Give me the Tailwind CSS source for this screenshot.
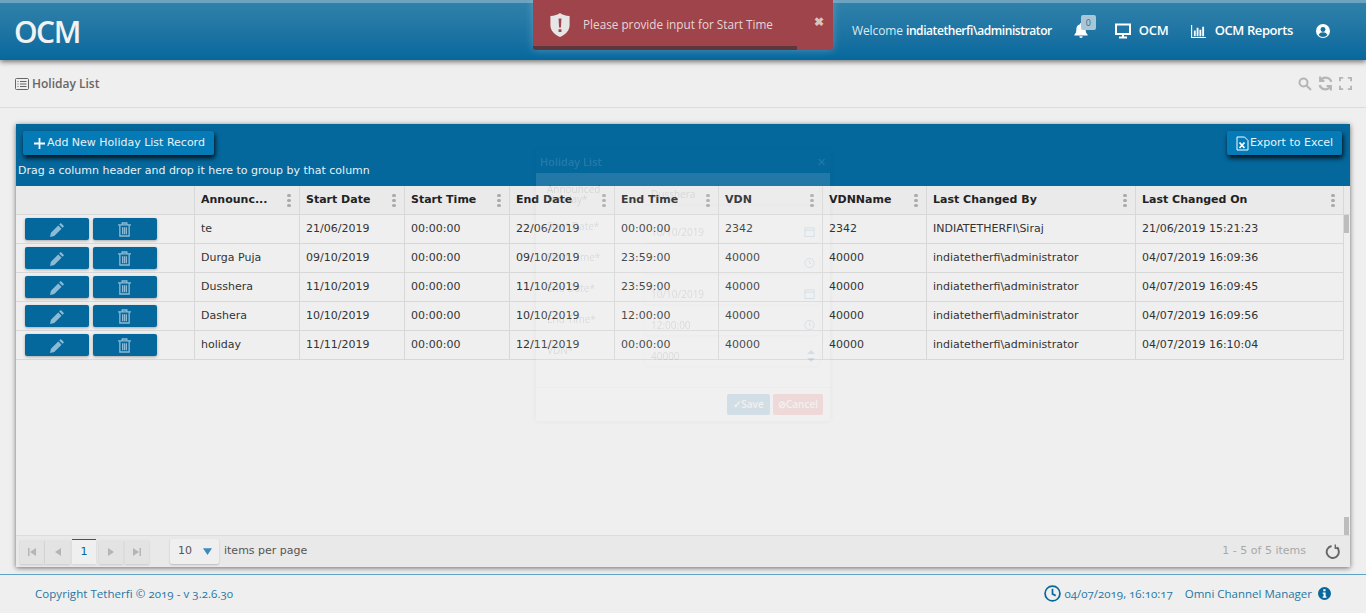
<!DOCTYPE html>
<html lang="en">
<head>
    <meta charset="UTF-8">
    <title>OCM - Holiday List</title>
    <script src="https://cdn.jsdelivr.net/npm/@tailwindcss/browser@4"></script>
</head>
<body class="bg-[#efefef] font-['Open_Sans',sans-serif] overflow-hidden">
<div class="relative w-[1366px] h-[613px] overflow-hidden flex flex-col">

    <!-- Navbar -->
    <nav class="h-[60px] shrink-0 border-t-[3px] border-[#6ba3c1] bg-gradient-to-b from-[#2f81a9] to-[#05689d] shadow-[0_2px_5px_rgba(0,0,0,0.5)] flex items-center text-white z-10">
        <h1 class="ml-[14px] text-[30px] leading-none font-semibold text-[#f2f2f2] tracking-[-1.5px] mt-[1px]">OCM</h1>
        <div class="ml-auto flex items-center h-full mt-[-1px]">
            <span class="text-[12px] text-[#dceaf2] tracking-[-0.1px]">Welcome <span class="font-semibold text-white tracking-[-0.43px]">indiatetherfi\administrator</span></span>
            <div class="relative ml-[22px] w-[14px] h-[16px]">
                <svg viewBox="0 0 16 18" class="w-[14px] h-[16px] fill-white"><path d="M8 0a1.2 1.2 0 0 1 1.2 1.3C12 2 13.3 4 13.3 7c0 3.500 1 4.800 2.200 6v1H.5v-1c1.200-1.200 2.200-2.500 2.200-6 0-3 1.300-5 4.100-5.700A1.200 1.200 0 0 1 8 0zM6 15h4a2 2 0 0 1-4 0z"/></svg>
                <span class="absolute left-[7px] top-[-8px] w-[15px] h-[15px] bg-[#a9c6d6] rounded-[2px] text-[9px] leading-[15px] text-center text-[#2f6f92]">0</span>
            </div>
            <svg viewBox="0 0 16 16" class="ml-[27px] w-[16px] h-[16px] fill-none stroke-white"><rect x="1" y="1.500" width="14" height="9.500" stroke-width="2"/><path d="M8 11v3M4 14.500h8" stroke-width="2"/></svg>
            <span class="ml-[8px] text-[13px] font-semibold tracking-[-0.2px]">OCM</span>
            <svg viewBox="0 0 16 14" class="ml-[22px] w-[15px] h-[13px] fill-white"><path d="M0 0h1.200v12.800H16V14H0z"/><path d="M3 6h2v6H3zM6 3h2v9H6zM9 5h2v7H9zM12 2h2v10h-2z"/></svg>
            <span class="ml-[9px] text-[13px] font-semibold tracking-[-0.4px]">OCM Reports</span>
            <svg viewBox="0 0 16 16" class="ml-[23px] mr-[36px] w-[14px] h-[14px]"><circle cx="8" cy="8" r="8" fill="#fff"/><circle cx="8" cy="6.200" r="2.800" fill="#1a7099"/><path d="M3 12.500c1-2.200 3-3 5-3s4 .8 5 3a6.500 6.500 0 0 1-10 0z" fill="#1a7099"/></svg>
        </div>
    </nav>

    <!-- Page title -->
    <div class="h-[48px] shrink-0 border-b border-[#dcdcdc] flex items-center pl-[15px] pr-[14px] text-[#666]">
        <svg viewBox="0 0 14 12" class="w-[14px] h-[12px] fill-none stroke-[#666]"><rect x=".5" y=".5" width="13" height="11" rx="1"/><path d="M2.500 3.500h1M5 3.500h6.500M2.500 6h1M5 6h6.500M2.500 8.500h1M5 8.500h6.500"/></svg>
        <span class="ml-[3px] text-[12px] font-semibold">Holiday List</span>
        <div class="ml-auto flex items-center gap-[6px]">
            <svg viewBox="0 0 14 14" class="w-[14px] h-[14px] fill-none stroke-[#b5b5b5] stroke-2"><circle cx="5.500" cy="5.500" r="4"/><path d="M8.500 8.500l4.500 4.500"/></svg>
            <svg viewBox="0 0 14 14" class="w-[15px] h-[15px] fill-none stroke-[#b5b5b5] stroke-2"><path d="M12.500 5.500A5.600 5.600 0 0 0 2.500 4M1.500 8.500a5.600 5.600 0 0 0 10 1.500"/><path d="M2 .5v4h4M12 13.500v-4H8"/></svg>
            <svg viewBox="0 0 14 14" class="w-[13px] h-[13px] fill-none stroke-[#b5b5b5] stroke-2"><path d="M1 4.500V1h3.500M9.500 1H13v3.500M13 9.500V13H9.500M4.500 13H1V9.500"/></svg>
        </div>
    </div>

    <!-- Grid card -->
    <section class="mt-[16px] mx-[16px] h-[443px] shrink-0 flex flex-col bg-[#efefef] shadow-[0_1px_5px_rgba(0,0,0,0.55)] font-['DejaVu_Sans',sans-serif]">
        <div class="h-[62px] shrink-0 bg-[#05689d] pl-[7px] pr-[8px] pt-[7px] text-white">
            <div class="flex justify-between">
                <button class="h-[24px] w-[191px] pl-[2px] bg-[#047bb7] rounded-[2px] shadow-[1px_3px_5px_rgba(0,0,0,0.9)] flex items-center justify-center text-[11px] text-[#e8f1f6]">
                    <svg viewBox="0 0 10 10" class="w-[11px] h-[11px] stroke-white stroke-[1.600]"><path d="M5 0v10M0 5h10"/></svg>
                    <span class="ml-[2px]">Add New Holiday List Record</span>
                </button>
                <button class="h-[24px] w-[115px] bg-[#047bb7] rounded-[2px] shadow-[1px_3px_5px_rgba(0,0,0,0.9)] flex items-center justify-center text-[11px] text-[#e8f1f6]">
                    <svg viewBox="0 0 13 15" class="w-[13px] h-[15px] fill-none stroke-white"><path d="M1 14V1h7.500L12 4.500V14z"/><path d="M3.500 6.500l5 5.500M8.500 6.500l-5 5.500" stroke-width="1.800"/></svg>
                    <span class="ml-[1px]">Export to Excel</span>
                </button>
            </div>
            <p class="mt-[9px] -ml-[5px] text-[11px] leading-[14px] text-[#e8f1f6]">Drag a column header and drop it here to group by that column</p>
        </div>

        <div class="h-[29px] shrink-0 pr-[6px] border-b border-[#d8d8d8] bg-[#eaeaea]">
            <div id="grid-head" class="grid grid-cols-[179px_105px_105px_105px_105px_104px_104px_104px_209px_208px] h-full"></div>
        </div>
        <div class="flex-1 flex min-h-0">
            <div id="grid-rows" class="flex-1 min-w-0"></div>
            <div class="w-[6px] bg-[#efefef] relative">
                <div class="absolute left-0 top-0 w-[5px] h-[18px] bg-[#bdbdbd]"></div>
                <div class="absolute left-0 bottom-0 w-[5px] h-[18px] bg-[#bdbdbd]"></div>
            </div>
        </div>

        <!-- Pager -->
        <div class="h-[32px] shrink-0 bg-[#e9e9e9] border-t border-[#dcdcdc] flex items-center pl-[4px] pr-[10px] text-[11px] text-[#555]">
            <div class="flex items-center gap-[1px]">
                <button class="w-[24px] h-[24px] bg-[#e3e3e3] shadow-[0_1px_2px_rgba(0,0,0,0.15)] flex items-center justify-center text-[#b5b5b5]"><svg viewBox="0 0 8 8" class="w-[8px] h-[8px] fill-current"><path d="M0 0h1.500v8H0zM8 0v8L2 4z"/></svg></button>
                <button class="w-[25px] h-[24px] bg-[#e3e3e3] shadow-[0_1px_2px_rgba(0,0,0,0.15)] flex items-center justify-center text-[#b5b5b5]"><svg viewBox="0 0 6 8" class="w-[6px] h-[8px] fill-current"><path d="M6 0v8L0 4z"/></svg></button>
                <span class="ml-[1px] mr-[2px] w-[24px] h-[25px] -mt-[1px] border-t border-[#05689d] bg-[#efefef] shadow-[0_1px_2px_rgba(0,0,0,0.1)] text-center leading-[24px] text-[#05689d]">1</span>
                <button class="w-[24px] h-[24px] bg-[#e3e3e3] shadow-[0_1px_2px_rgba(0,0,0,0.15)] flex items-center justify-center text-[#b5b5b5]"><svg viewBox="0 0 6 8" class="w-[6px] h-[8px] fill-current"><path d="M0 0v8l6-4z"/></svg></button>
                <button class="ml-[1px] w-[24px] h-[24px] bg-[#e3e3e3] shadow-[0_1px_2px_rgba(0,0,0,0.15)] flex items-center justify-center text-[#b5b5b5]"><svg viewBox="0 0 8 8" class="w-[8px] h-[8px] fill-current"><path d="M8 0H6.500v8H8zM0 0v8l6-4z"/></svg></button>
            </div>
            <div class="ml-[21px] w-[49px] h-[25px] bg-[#efefef] rounded-[2px] shadow-[0_1px_2px_rgba(0,0,0,0.2)] flex items-center justify-between pl-[8px] pr-[7px]">
                <span>10</span>
                <svg viewBox="0 0 8 6" class="w-[9px] h-[7px] fill-[#3b8db8]"><path d="M0 0h8L4 6z"/></svg>
            </div>
            <span class="ml-[5px]">items per page</span>
            <span class="ml-auto text-[#a8a8a8]">1 - 5 of 5 items</span>
            <svg viewBox="0 0 16 16" class="ml-[19px] w-[15px] h-[15px] fill-none stroke-[#666]"><path d="M12.500 3.500A6.500 6.500 0 1 1 7 2.100" stroke-width="2"/><path d="M11 0.500v4h4" stroke-width="1.500"/></svg>
        </div>
    </section>

    <!-- Footer -->
    <footer class="mt-[7px] flex-1 border-t border-[#5ea3c4] flex items-center pl-[35px] pr-[35px] pb-[1px] text-[11.500px] text-[#1f76a3] oldstyle-nums">
        <span class="tracking-[0.05px]">Copyright Tetherfi © 2019 - v 3.2.6.30</span>
        <svg viewBox="0 0 16 16" class="ml-auto w-[17px] h-[17px] fill-none stroke-[#05689d] stroke-[1.600]"><circle cx="8" cy="8" r="7"/><path d="M8 3.500V8.500l3 1.500"/></svg>
        <span class="ml-[4px] mr-[12px]">04/07/2019, 16:10:17</span>
        <span>Omni Channel Manager</span>
        <svg viewBox="0 0 14 14" class="ml-[6px] w-[13px] h-[13px]"><circle cx="7" cy="7" r="7" fill="#05689d"/><path d="M5.700 2.500h2.400v2H5.700zM5 6h3.200v4.200H9.200v1.300H5v-1.300h1V7.300H5z" fill="#fff"/></svg>
    </footer>

    <!-- Fading dialog left behind the toast -->
    <div class="absolute left-[536px] top-[150px] w-[294px] h-[271px] opacity-[0.12] flex flex-col text-[#444] text-[10px] leading-[10px] shadow-[0_0_6px_rgba(0,0,0,0.4)]">
        <div class="h-[23px] shrink-0 flex items-center justify-between px-[4px] text-white text-[11px]"><span class="font-semibold">Holiday List</span><span>✕</span></div>
        <div class="flex-1 bg-white pl-[11px] pt-[11px] flex flex-col">
            <div class="flex h-[38px]"><span class="w-[98px]">Announced<br>Holiday*</span><span class="w-[174px] h-[20px] shadow-[0_1px_3px_rgba(0,0,0,0.2)] pl-[6px] leading-[20px]">Dusshera</span></div>
            <div class="flex h-[31px]"><span class="w-[98px] -mt-[1px]">Start Date*</span><span class="w-[174px] h-[20px] shadow-[0_1px_3px_rgba(0,0,0,0.2)] pl-[6px] leading-[20px] flex justify-between pr-[4px]">10/10/2019<svg viewBox="0 0 12 12" class="w-[11px] h-[20px] fill-none stroke-[#05689d]"><rect x="1" y="1.500" width="10" height="9.500"/><path d="M1 4h10"/></svg></span></div>
            <div class="flex h-[31px]"><span class="w-[98px] -mt-[1px]">Start Time*</span><span class="w-[174px] h-[20px] shadow-[0_1px_3px_rgba(0,0,0,0.2)] pl-[6px] leading-[20px] flex justify-end pr-[4px]"><svg viewBox="0 0 12 12" class="w-[11px] h-[20px] fill-none stroke-[#05689d]"><circle cx="6" cy="6" r="5"/><path d="M6 3v3l2 1"/></svg></span></div>
            <div class="flex h-[31px]"><span class="w-[98px] -mt-[1px]">End Date*</span><span class="w-[174px] h-[20px] shadow-[0_1px_3px_rgba(0,0,0,0.2)] pl-[6px] leading-[20px] flex justify-between pr-[4px]">10/10/2019<svg viewBox="0 0 12 12" class="w-[11px] h-[20px] fill-none stroke-[#05689d]"><rect x="1" y="1.500" width="10" height="9.500"/><path d="M1 4h10"/></svg></span></div>
            <div class="flex h-[31px]"><span class="w-[98px] -mt-[1px]">End Time*</span><span class="w-[174px] h-[20px] shadow-[0_1px_3px_rgba(0,0,0,0.2)] pl-[6px] leading-[20px] flex justify-between pr-[4px]">12:00:00<svg viewBox="0 0 12 12" class="w-[11px] h-[20px] fill-none stroke-[#05689d]"><circle cx="6" cy="6" r="5"/><path d="M6 3v3l2 1"/></svg></span></div>
            <div class="flex h-[31px]"><span class="w-[98px] -mt-[1px]">VDN*</span><span class="w-[174px] h-[20px] shadow-[0_1px_3px_rgba(0,0,0,0.2)] pl-[6px] leading-[20px] flex justify-between pr-[4px]">40000<svg viewBox="0 0 8 12" class="w-[8px] h-[20px] fill-[#05689d]"><path d="M4 0l4 4H0zM4 12l4-4H0z"/></svg></span></div>
            <div class="mt-auto -ml-[11px] h-[34px] border-t border-[#ddd] pt-[6px] pr-[7px] flex justify-end gap-[3px] text-white font-semibold">
                <span class="w-[43px] h-[21px] bg-[#05689d] rounded-[2px] text-center leading-[21px]">✓Save</span>
                <span class="w-[50px] h-[21px] bg-[#e33] rounded-[2px] text-center leading-[21px]">⊘Cancel</span>
            </div>
        </div>
    </div>

    <!-- Toast -->
    <div class="absolute left-[533px] top-0 w-[300px] h-[50px] z-20 bg-[#9e444a] rounded-b-[3px] shadow-[0_0_8px_rgba(255,255,255,0.25)] text-[#e6d5d6] font-['Open_Sans',sans-serif] overflow-hidden">
        <div class="flex items-start h-full">
            <svg viewBox="0 0 16 20" class="ml-[17px] mt-[13px] w-[20px] h-[24px]"><path d="M8 0c2 1.500 4.500 2.300 8 2.500V10c0 4.500-3 8-8 10-5-2-8-5.500-8-10V2.500C3.500 2.300 6 1.500 8 0z" fill="#e6e6e6"/><path d="M6.800 4.500h2.400l-.4 7.500H7.200zM6.800 13.500h2.400v2.400H6.800z" fill="#9e444a"/></svg>
            <span class="ml-[13px] mt-[15px] text-[11.750px] leading-[18px]">Please provide input for Start Time</span>
            <span class="absolute right-[9px] top-[13px] text-[12px] font-bold text-[#d9c4c5]">✖</span>
        </div>
        <div class="absolute left-0 bottom-0 h-[4px] w-[264px] bg-[#5f363b]"></div>
    </div>
</div>

<script>
    const columns = ["", "Announc...", "Start Date", "Start Time", "End Date", "End Time", "VDN", "VDNName", "Last Changed By", "Last Changed On"];
    const records = [
        ["te", "21/06/2019", "00:00:00", "22/06/2019", "00:00:00", "2342", "2342", "INDIATETHERFI\\Siraj", "21/06/2019 15:21:23"],
        ["Durga Puja", "09/10/2019", "00:00:00", "09/10/2019", "23:59:00", "40000", "40000", "indiatetherfi\\administrator", "04/07/2019 16:09:36"],
        ["Dusshera", "11/10/2019", "00:00:00", "11/10/2019", "23:59:00", "40000", "40000", "indiatetherfi\\administrator", "04/07/2019 16:09:45"],
        ["Dashera", "10/10/2019", "00:00:00", "10/10/2019", "12:00:00", "40000", "40000", "indiatetherfi\\administrator", "04/07/2019 16:09:56"],
        ["holiday", "11/11/2019", "00:00:00", "12/11/2019", "00:00:00", "40000", "40000", "indiatetherfi\\administrator", "04/07/2019 16:10:04"]
    ];

    const dots = `<span class="ml-auto flex flex-col gap-[2px] pr-[1px]"><i class="block w-[4px] h-[3px] rounded-full bg-[#aaa]"></i><i class="block w-[4px] h-[3px] rounded-full bg-[#aaa]"></i><i class="block w-[4px] h-[3px] rounded-full bg-[#aaa]"></i></span>`;
    const pencil = `<svg viewBox="0 0 16 16" class="w-[15px] h-[15px] fill-[#8dbbd5]"><path d="M11.500 1l3.500 3.500-1.700 1.700-3.500-3.500zM8.800 3.700l3.500 3.500-7.800 7.800L0 16l1-4.500z"/></svg>`;
    const trash = `<svg viewBox="0 0 14 16" class="w-[13px] h-[15px] mr-[2px] fill-none stroke-[#8dbbd5] stroke-[1.400]"><path d="M0 3h14M4.500 3V1h5v2M2 3v12h10V3M5 5.500v7.500M7 5.500v7.500M9 5.500v7.500"/></svg>`;

    document.getElementById("grid-head").innerHTML = columns.map((name, i) => `
        <div class="flex items-center pl-[6px] pr-[7px] border-r border-[#d8d8d8] text-[11px] font-bold text-[#222]">
            <span>${name}</span>${i > 0 ? dots : ""}
        </div>`).join("");

    document.getElementById("grid-rows").innerHTML = records.map(row => `
        <div class="grid grid-cols-[179px_105px_105px_105px_105px_104px_104px_104px_209px_208px] h-[29px] border-b border-[#d8d8d8] text-[11px] text-[#333]">
            <div class="flex items-center gap-[4px] pl-[9px] border-r border-[#d8d8d8]">
                <button class="w-[64px] h-[22px] bg-[#05689d] rounded-[2px] shadow-[0_1px_3px_rgba(0,0,0,0.3)] flex items-center justify-center">${pencil}</button>
                <button class="w-[64px] h-[22px] bg-[#05689d] rounded-[2px] shadow-[0_1px_3px_rgba(0,0,0,0.3)] flex items-center justify-center">${trash}</button>
            </div>
            ${row.map(value => `<div class="flex items-center pl-[6px] pr-[7px] border-r border-[#d8d8d8] whitespace-nowrap">${value}</div>`).join("")}
        </div>`).join("");
</script>
</body>
</html>
